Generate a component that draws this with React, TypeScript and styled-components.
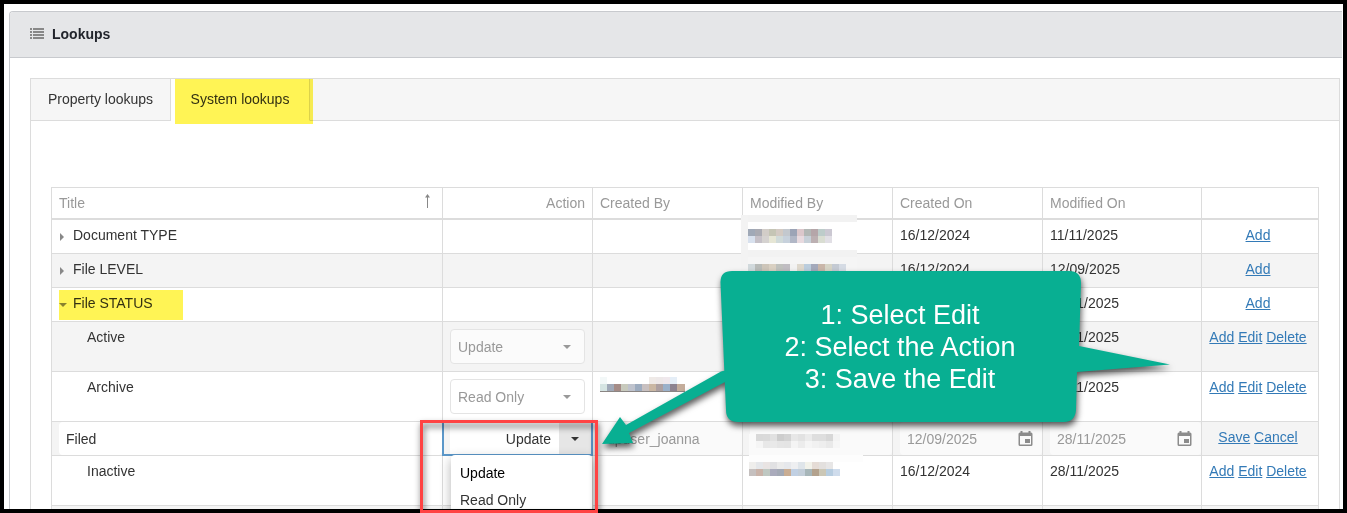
import React from "react";
import styled, { createGlobalStyle, css } from "styled-components";

const GlobalStyle = createGlobalStyle`
  *, *::before, *::after { box-sizing: border-box; }
  body {
    margin: 0;
    background: #fff;
    color: #333;
    font-family: "Liberation Sans", Arial, sans-serif;
    font-size: 14px;
    line-height: 20px;
  }
  button, input, select { font: inherit; color: inherit; margin: 0; }
`;

const LINE = "#dcdcdc";

const Stage = styled.div`
  position: relative;
  height: 100vh;
  overflow: hidden;
`;

const Frame = styled.main`
  height: 100%;
  overflow: hidden;
  border: 4px solid #000;
  padding: 7px 1px 0 5px;
`;

const Panel = styled.section`
  border: 1px solid #c8cace;
  border-right: 0;
  border-radius: 4px 0 0 0;
`;

const PanelHeader = styled.header`
  display: flex;
  align-items: center;
  gap: 8px;
  height: 46px;
  padding: 0 20px 1px;
  background: #e5e6e8;
  border-bottom: 1px solid #c8cace;
  border-radius: 3px 0 0 0;
`;

const PanelTitle = styled.h1`
  margin: 0;
  font-size: 14px;
  line-height: 20px;
  font-weight: bold;
  color: #22252c;
`;

const PanelBody = styled.div`
  padding: 20px 2px 0 20px;
`;

const TabStrip = styled.div`
  border: 1px solid ${LINE};
`;

const TabList = styled.div`
  display: flex;
  height: 42px;
  background: #f6f6f6;
  border-bottom: 1px solid ${LINE};
`;

const Tab = styled.button<{ $active?: boolean }>`
  position: relative;
  width: ${(p) => (p.$active ? 139 : 140)}px;
  height: 42px;
  padding: 0 0 2px;
  border: 0;
  border-right: 1px solid ${LINE};
  border-bottom: 1px solid ${(p) => (p.$active ? "#fff" : LINE)};
  background: ${(p) => (p.$active ? "#fff" : "#f6f6f6")};
`;

const Marker = styled.span<{ $for: "tab" | "row" }>`
  position: absolute;
  background: #fff455;
  mix-blend-mode: multiply;
  pointer-events: none;
  ${(p) =>
    p.$for === "tab"
      ? css`
          inset: 0 -4px -4px 4px;
        `
      : css`
          top: 2px;
          bottom: 1px;
          left: 7px;
          width: 124px;
        `}
`;

const TabContent = styled.div`
  padding: 66px 20px 20px;
`;

const Grid = styled.table`
  width: 100%;
  table-layout: fixed;
  border-collapse: separate;
  border-spacing: 0;
  border-top: 1px solid ${LINE};
  border-left: 1px solid ${LINE};
`;

const HeadCell = styled.th<{ $right?: boolean }>`
  height: 32px;
  padding: 5px 7px;
  border-right: 1px solid ${LINE};
  border-bottom: 2px solid ${LINE};
  color: #999;
  font-weight: normal;
  text-align: ${(p) => (p.$right ? "right" : "left")};
  vertical-align: top;
`;

const HeadLabel = styled.span`
  display: flex;
  justify-content: space-between;
  align-items: flex-start;
  padding-right: 4px;
`;

const Row = styled.tr<{ $alt?: boolean; $tall?: boolean }>`
  height: ${(p) => (p.$tall ? 50 : 34)}px;
  background: ${(p) => (p.$alt ? "#f4f4f4" : "#fff")};
`;

const Cell = styled.td<{ $flush?: boolean; $control?: boolean }>`
  position: relative;
  padding: ${(p) => (p.$flush ? "0 0 0 7px" : p.$control ? "7px" : "5px 7px")};
  border-right: 1px solid ${LINE};
  border-bottom: 1px solid ${LINE};
  vertical-align: top;
`;

const FocusCell = styled(Cell)`
  &::after {
    content: "";
    position: absolute;
    inset: -1px;
    border: 2px solid #5b97c9;
    pointer-events: none;
  }
`;

const LinkCell = styled(Cell)`
  padding-left: 3px;
  padding-right: 7px;
  text-align: center;
  white-space: nowrap;
`;

const Link = styled.a`
  color: #337ab7;
  text-decoration: underline;
`;

const TreeLabel = styled.div<{ $child?: boolean }>`
  display: flex;
  align-items: center;
  padding-left: ${(p) => (p.$child ? 28 : 0)}px;
`;

const Toggle = styled.button`
  display: flex;
  align-items: center;
  width: 14px;
  height: 16px;
  padding: 4px 0 0;
  border: 0;
  background: none;
  color: #888;
`;

const SelectBox = styled.div`
  position: relative;
  display: flex;
  align-items: center;
  color: #999;
`;

const DisabledSelect = styled.select`
  appearance: none;
  width: 100%;
  height: 35px;
  padding: 0 28px 0 7px;
  border: 1px solid #e4e4e4;
  border-radius: 4px;
  background: rgba(255, 255, 255, 0.6);
  &:disabled { opacity: 1; color: #999; }
`;

const SelectCaret = styled.span`
  position: absolute;
  right: 12px;
  display: flex;
  width: 12px;
  justify-content: center;
  pointer-events: none;
`;

const ActiveSelect = styled.select`
  appearance: none;
  flex: 1;
  min-width: 0;
  height: 33px;
  padding: 0 8px;
  border: 0;
  border-radius: 0;
  background: #fff;
  color: #333;
  text-align: right;
  text-align-last: right;
  outline: none;
`;

const DropButton = styled.button`
  display: flex;
  align-items: center;
  justify-content: center;
  width: 33px;
  height: 33px;
  padding: 0 2px 0 0;
  border: 0;
  background: #e6e6e6;
  color: #333;
`;

const Options = styled.ul`
  position: absolute;
  z-index: 3;
  top: 100%;
  left: 8px;
  right: 0;
  margin: 0;
  padding: 5px 0;
  list-style: none;
  background: #fff;
  border-radius: 4px;
  box-shadow: 0 4px 12px rgba(0, 0, 0, 0.3);
`;

const Option = styled.li<{ $selected?: boolean }>`
  height: 27px;
  padding: 3px 9px;
  color: ${(p) => (p.$selected ? "#000" : "#333")};
`;

const Field = styled.div<{ $disabled?: boolean }>`
  display: flex;
  align-items: center;
  height: 33px;
  padding: 0 9px 0 7px;
  border-radius: 4px;
  background: ${(p) => (p.$disabled ? "#fafafa" : "#fff")};
  color: ${(p) => (p.$disabled ? "#999" : "#333")};
`;

const FieldInput = styled.input`
  flex: 1;
  min-width: 0;
  width: 100%;
  height: 33px;
  padding: 0;
  border: 0;
  background: none;
  outline: none;
`;

const CalendarButton = styled.button`
  display: flex;
  padding: 0;
  border: 0;
  background: none;
`;

const Annotations = styled.div`
  position: absolute;
  z-index: 5;
  inset: 0;
  pointer-events: none;
`;

const Drawing = styled.svg`
  display: block;
  width: 100%;
  height: 100%;
`;

const CalloutText = styled.p`
  position: absolute;
  left: 720px;
  top: 299px;
  width: 360px;
  margin: 0;
  color: #fff;
  font-size: 27px;
  line-height: 32px;
  text-align: center;
`;

const ListIcon = () => (
  <svg width="14" height="12" viewBox="0 0 14 12" fill="#888" aria-hidden="true">
    {[0, 3, 6, 9].map((y) => (
      <React.Fragment key={y}>
        <rect x="0" y={y} width="2" height="2" />
        <rect x="3" y={y} width="11" height="2" />
      </React.Fragment>
    ))}
  </svg>
);

const CaretDown = () => (
  <svg width="8" height="4" viewBox="0 0 8 4" fill="currentColor" aria-hidden="true">
    <path d="M0 0h8L4 4z" />
  </svg>
);

const CaretRight = () => (
  <svg width="6" height="8" viewBox="0 0 6 8" fill="currentColor" aria-hidden="true">
    <path d="M1 0l4 4-4 4z" />
  </svg>
);

const SortArrow = () => (
  <svg width="7" height="16" viewBox="0 0 7 16" fill="#888" aria-hidden="true">
    <path d="M3 2h1v13H3zM3.500 1L6 4.500H1z" />
  </svg>
);

const CalendarIcon = () => (
  <svg width="15" height="16" viewBox="0 0 15 16" fill="#8c8c8c" aria-hidden="true">
    <path
      fillRule="evenodd"
      d="M2.500 0h2v1.500h6V0h2v1.500h.5q1.500 0 1.500 1.500v10.500q0 1.500-1.500 1.500h-11Q.5 15 .5 13.500V3Q.5 1.500 2 1.500h.5zM2 5v8.500h11V5z"
    />
    <rect x="7" y="8" width="5" height="4" />
  </svg>
);

const Mosaic = ({ x, y, colors }: { x: number; y: number; colors: string }) => (
  <g>
    {colors.split(" ").map((c, i) =>
      c === "-" ? null : <rect key={i} x={x + i * 7} y={y} width="7" height="7" fill={`#${c}`} />
    )}
  </g>
);

const Links = ({ names }: { names: string[] }) => (
  <LinkCell>
    {names.map((n, i) => (
      <React.Fragment key={n}>
        {i > 0 && " "}
        <Link href="#">{n}</Link>
      </React.Fragment>
    ))}
  </LinkCell>
);

const GroupRow = ({ name, created, modified, open, alt }: {
  name: string; created?: string; modified: string; open?: boolean; alt?: boolean;
}) => (
  <Row $alt={alt}>
    <Cell>
      <TreeLabel>
        <Toggle aria-label={`Toggle ${name}`} aria-expanded={!!open}>
          {open ? <CaretDown /> : <CaretRight />}
        </Toggle>
        {name}
      </TreeLabel>
      {open && <Marker $for="row" />}
    </Cell>
    <Cell />
    <Cell />
    <Cell />
    <Cell>{created}</Cell>
    <Cell>{modified}</Cell>
    <Links names={["Add"]} />
  </Row>
);

const ItemRow = ({ name, action, created, modified, alt }: {
  name: string; action?: string; created?: string; modified: string; alt?: boolean;
}) => (
  <Row $tall $alt={alt}>
    <Cell>
      <TreeLabel $child>{name}</TreeLabel>
    </Cell>
    <Cell $control>
      {action && (
        <SelectBox>
          <DisabledSelect disabled aria-label={`${name} action`} defaultValue={action}>
            <option>Update</option>
            <option>Read Only</option>
          </DisabledSelect>
          <SelectCaret>
            <CaretDown />
          </SelectCaret>
        </SelectBox>
      )}
    </Cell>
    <Cell />
    <Cell />
    <Cell>{created}</Cell>
    <Cell>{modified}</Cell>
    <Links names={["Add", "Edit", "Delete"]} />
  </Row>
);

const DateCell = ({ label, value }: { label: string; value: string }) => (
  <Cell $flush>
    <Field $disabled>
      <FieldInput disabled aria-label={label} defaultValue={value} />
      <CalendarButton disabled aria-label={`Pick ${label}`}>
        <CalendarIcon />
      </CalendarButton>
    </Field>
  </Cell>
);

const EditRow = () => (
  <Row $alt>
    <Cell $flush>
      <Field>
        <FieldInput aria-label="Title" defaultValue="Filed" />
      </Field>
    </Cell>
    <FocusCell $flush>
      <SelectBox>
        <ActiveSelect aria-label="Action" defaultValue="Update">
          <option>Update</option>
          <option>Read Only</option>
        </ActiveSelect>
        <DropButton aria-label="Show actions">
          <CaretDown />
        </DropButton>
      </SelectBox>
      <Options role="listbox">
        <Option role="option" aria-selected="true" $selected>Update</Option>
        <Option role="option" aria-selected="false">Read Only</Option>
      </Options>
    </FocusCell>
    <Cell $flush>
      <Field $disabled>
        <FieldInput disabled aria-label="Created by" defaultValue="dpuser_joanna" />
      </Field>
    </Cell>
    <Cell $flush>
      <Field $disabled />
    </Cell>
    <DateCell label="Created on" value="12/09/2025" />
    <DateCell label="Modified on" value="28/11/2025" />
    <Links names={["Save", "Cancel"]} />
  </Row>
);

export default function App() {
  return (
    <Stage>
      <GlobalStyle />
      <Frame>
        <Panel>
          <PanelHeader>
            <ListIcon />
            <PanelTitle>Lookups</PanelTitle>
          </PanelHeader>
          <PanelBody>
            <TabStrip>
              <TabList role="tablist">
                <Tab role="tab" aria-selected="false">Property lookups</Tab>
                <Tab role="tab" aria-selected="true" $active>
                  System lookups
                  <Marker $for="tab" />
                </Tab>
              </TabList>
              <TabContent role="tabpanel">
                <Grid>
                  <colgroup>
                    <col />
                    <col width="150" />
                    <col width="150" />
                    <col width="150" />
                    <col width="150" />
                    <col width="159" />
                    <col width="117" />
                  </colgroup>
                  <thead>
                    <tr>
                      <HeadCell>
                        <HeadLabel>
                          Title
                          <SortArrow />
                        </HeadLabel>
                      </HeadCell>
                      <HeadCell $right>Action</HeadCell>
                      <HeadCell>Created By</HeadCell>
                      <HeadCell>Modified By</HeadCell>
                      <HeadCell>Created On</HeadCell>
                      <HeadCell>Modified On</HeadCell>
                      <HeadCell />
                    </tr>
                  </thead>
                  <tbody>
                    <GroupRow name="Document TYPE" created="16/12/2024" modified="11/11/2025" />
                    <GroupRow name="File LEVEL" created="16/12/2024" modified="12/09/2025" alt />
                    <GroupRow name="File STATUS" modified="28/11/2025" open />
                    <ItemRow name="Active" action="Update" modified="28/11/2025" alt />
                    <ItemRow name="Archive" action="Read Only" modified="28/11/2025" />
                    <EditRow />
                    <ItemRow name="Inactive" created="16/12/2024" modified="28/11/2025" />
                    <Row $alt>
                      <Cell /><Cell /><Cell /><Cell /><Cell /><Cell /><Cell />
                    </Row>
                  </tbody>
                </Grid>
              </TabContent>
            </TabStrip>
          </PanelBody>
        </Panel>
      </Frame>

      <Annotations>
        <Drawing aria-hidden="true">
          <defs>
            <filter id="shade" x="-20%" y="-20%" width="140%" height="150%" colorInterpolationFilters="sRGB">
              <feDropShadow dx="1" dy="4" stdDeviation="3" floodColor="#000" floodOpacity="0.65" />
            </filter>
          </defs>

          <rect x="741" y="215" width="116" height="56" fill="#fff" />
          <rect x="741" y="215" width="116" height="7" fill="#f2f2f2" />
          <rect x="741" y="250" width="116" height="7" fill="#f2f2f2" />
          <rect x="741" y="257" width="116" height="14" fill="#f5f5f5" />
          <rect x="741" y="215" width="7" height="56" fill="#f3f3f3" />
          <Mosaic x={748} y={229} colors="a0a9b7 a9aab2 d2cdc8 c5c5b5 d3cac3 c3c8ce 9ca4b6 dbc7cb b2b7b5 b5a6a9 bdccca cbc8d2" />
          <Mosaic x={748} y={236} colors="d8e1ee c5c0c7 d5d2d0 e6e6d5 d0dad9 c7d1dc b1b7c6 e8dadf c7d0d8 bcb0b2 d9ddd2 e1dfe5" />
          <Mosaic x={748} y={264} colors="d1d9dc b8bbb8 cdc5b9 d9d0c2 bfc1bd c0bdc2 f2f2f2 ded8cd bbcddd a4a9bb c9b6a9 d6d4c6 c4cad3 d5dbe4" />

          <Mosaic x={600} y={377} colors="f3f8f8 - - - - - - efeae7 ede8e8 efe8ec e5eef7" />
          <Mosaic x={600} y={384} colors="d5e4e2 a0a9b8 a58c87 c8cabd bfc3cd 9dacbf c8c0c0 cab7a3 ada0a1 9bb1ca 8d8390" />
          <rect x="677" y="384" width="8" height="7" fill="#c4ad9b" />
          <rect x="600" y="391" width="85" height="1" fill="#8a8583" />

          <rect x="749" y="434" width="114" height="21" fill="#fafafa" />
          <rect x="749" y="455" width="114" height="7" fill="#fdfdfd" />
          <Mosaic x={756} y={434} colors="d9d9d9 dadada e1e1e1 cdcdcd d3d3d3 e7e7e7 e2e2e2 ebebeb dedede dedede d7d7d7 f3f3f3" />
          <Mosaic x={756} y={441} colors="f5f5f5 e8e8e8 e9e9e9 e5e5e5 e4e4e4 f4f4f4 ececec f5f5f5 f1f1f1 eeeeee e9e9e9 f6f6f6" />
          <Mosaic x={749} y={462} colors="efeeec e5e7ea e9e4e3 e1e1e3 ebebeb e6e8ec eeeff1 dfe5ea f2f2ea e5dcd6 e3e0de e7e6e6" />
          <Mosaic x={749} y={469} colors="c5c0bf c9b3a9 bfc8c2 aaabbc a3a9b5 c9ad93 c1d0e3 c3ced9 a7b6b9 b3a28e cbc7b6 b7cde0 cfdcec" />

          <rect x="421.5" y="421.5" width="175" height="90" fill="none" stroke="#ff4343" strokeWidth="3" filter="url(#shade)" />

          <g fill="#08af92" filter="url(#shade)">
            <path d="M732 271H1069Q1081 271 1081 283L1079 346L1170 364.500L1077 372L1076 410Q1075 422 1064 422H738Q726 422 726 410L720.500 283Q720 271 732 271Z" />
            <path d="M602 444L620 417L626 425L721 371.500Q727 369 729 374Q730 379 726 381.500L629 433L633 443Z" />
          </g>
        </Drawing>
        <CalloutText>
          1: Select Edit
          <br />
          2: Select the Action
          <br />
          3: Save the Edit
        </CalloutText>
      </Annotations>
    </Stage>
  );
}
